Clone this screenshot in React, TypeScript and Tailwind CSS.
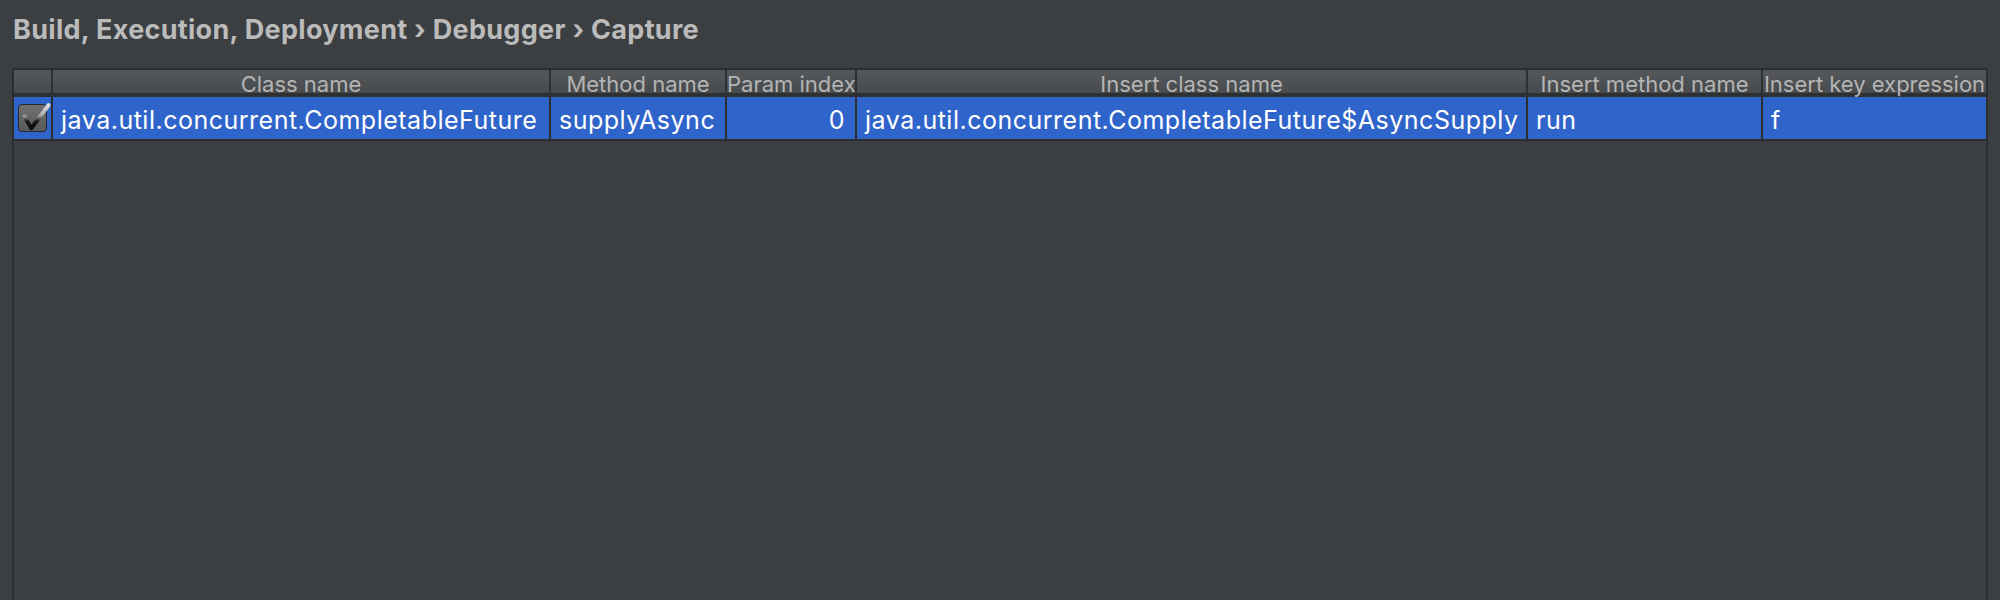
import React from "react";

type Column = {
  title: string;
  width: string;
  align: "left" | "right";
  value: string;
};

const columns: Column[] = [
  { title: "Class name", width: "w-[498px]", align: "left", value: "java.util.concurrent.CompletableFuture" },
  { title: "Method name", width: "w-[176px]", align: "left", value: "supplyAsync" },
  { title: "Param index", width: "w-[130px]", align: "right", value: "0" },
  { title: "Insert class name", width: "w-[671px]", align: "left", value: "java.util.concurrent.CompletableFuture$AsyncSupply" },
  { title: "Insert method name", width: "w-[235px]", align: "left", value: "run" },
  { title: "Insert key expression", width: "flex-1", align: "left", value: "f" },
];

function CheckBox() {
  return (
    <div className="relative h-[28px] w-[29px] rounded-[4px] border-[1.5px] border-[#262626] bg-gradient-to-b from-[#6e6f70] to-[#585a5b]">
      <svg
        className="absolute -top-[3px] left-0 overflow-visible"
        width="32"
        height="32"
        viewBox="0 0 32 32"
        fill="none"
      >
        <defs>
          <linearGradient id="chk" x1="0" y1="0" x2="0" y2="1">
            <stop offset="0" stopColor="#e0e0e0" />
            <stop offset="0.45" stopColor="#a8a8a8" />
            <stop offset="0.7" stopColor="#1a1a1a" />
            <stop offset="1" stopColor="#0a0a0a" />
          </linearGradient>
        </defs>
        <path
          d="M5.5 14.5 L12.3 26.2 L29.5 3.2"
          stroke="url(#chk)"
          strokeWidth="4"
          strokeLinecap="round"
          strokeLinejoin="round"
        />
      </svg>
    </div>
  );
}

export default function App() {
  return (
    <div
      className="flex h-[600px] w-full flex-col overflow-hidden bg-[#3c3f41]"
      style={{ fontFamily: "Inter, 'Liberation Sans', sans-serif" }}
    >
      {/* breadcrumb title */}
      <div className="flex h-[68px] shrink-0 items-start pl-[13px] pt-[15px]">
        <h1 className="text-[27px] font-bold leading-[30px] tracking-[0.3px] text-[#bbbbbb]">
          Build, Execution, Deployment › Debugger › Capture
        </h1>
      </div>

      {/* capture table */}
      <div className="mx-[12px] flex flex-1 flex-col border-2 border-b-0 border-[#2b2d2f] bg-[#3c3f41]">
        <div className="flex h-[27px] shrink-0 border-b-[4px] border-[#2e3032] bg-gradient-to-b from-[#55585a] to-[#484b4d] text-[22px] leading-[23px] text-[#b4b4b4]">
          <div className="w-[39px] border-r-2 border-[#2e3032]" />
          {columns.map((c, i) => (
            <div
              key={c.title}
              className={`${c.width} whitespace-nowrap pt-[3px] text-center ${
                i < columns.length - 1 ? "border-r-2 border-[#2e3032]" : ""
              }`}
            >
              {c.title}
            </div>
          ))}
        </div>

        <div className="flex h-[44px] shrink-0 border-b-2 border-[#2b2d2f] bg-[#2f65ca] text-[25px] leading-[42px] tracking-[0.5px] text-white">
          <div className="flex w-[39px] items-center justify-center border-r-2 border-[#2b2d2f]">
            <CheckBox />
          </div>
          {columns.map((c, i) => (
            <div
              key={c.title}
              className={`${c.width} overflow-hidden whitespace-nowrap pt-[2px] ${
                c.align === "right" ? "pr-[10px] text-right" : "pl-[8px] text-left"
              } ${i < columns.length - 1 ? "border-r-2 border-[#2b2d2f]" : ""}`}
            >
              {c.value}
            </div>
          ))}
        </div>

        <div className="flex-1" />
      </div>
    </div>
  );
}
